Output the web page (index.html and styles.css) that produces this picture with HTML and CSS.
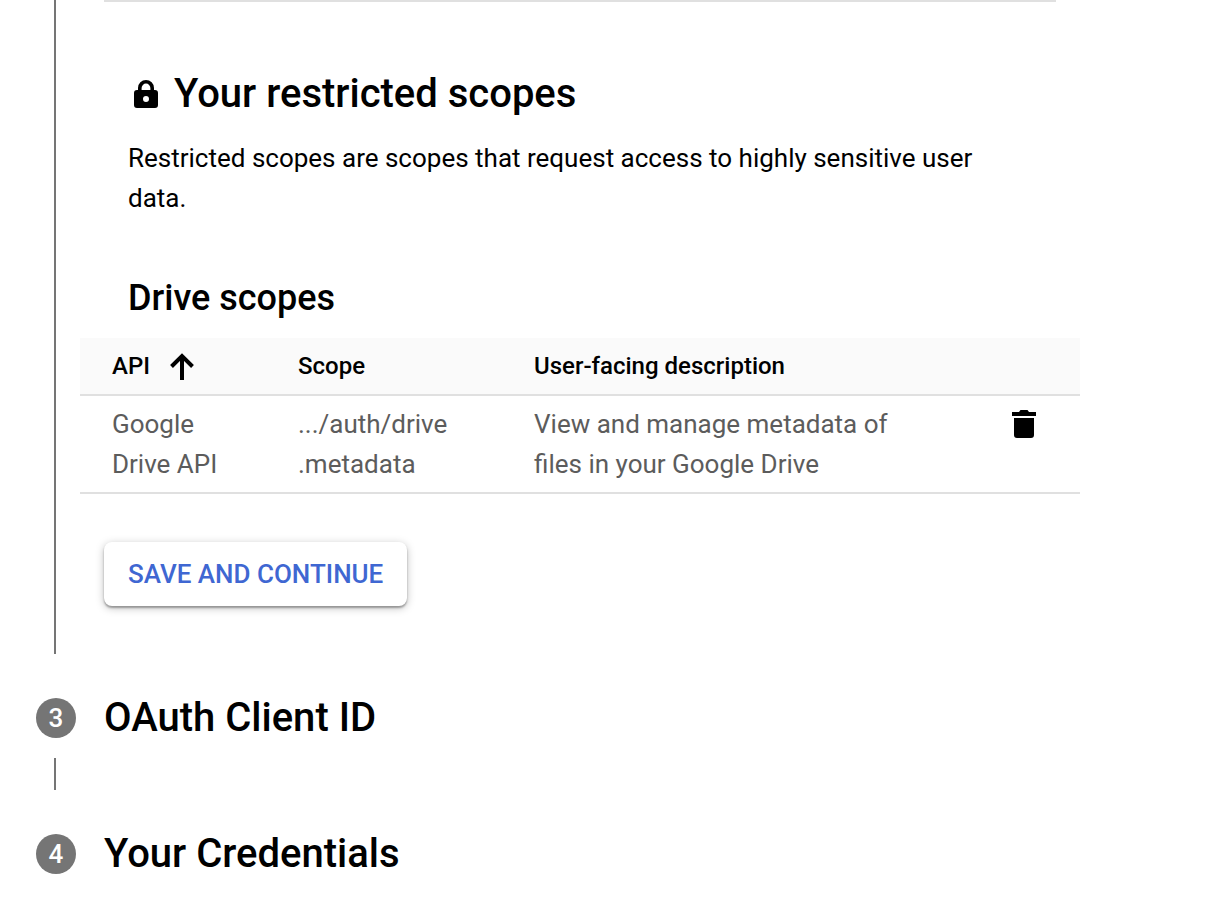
FILE: index.html
```
<!DOCTYPE html>
<html lang="en">
<head>
<meta charset="utf-8">
<meta name="viewport" content="width=device-width, initial-scale=1">
<title>Scopes</title>
<link rel="stylesheet" href="styles.css">
</head>
<body>
<main class="stepper">
  <section class="step-content">
    <hr class="divider">
    <div class="intro">
      <h2 class="title">
        <svg class="lock-icon" viewBox="0 0 24 28" aria-hidden="true"><path fill-rule="evenodd" d="M4 10V8a8 8 0 0 1 16 0v2h1a3 3 0 0 1 3 3v12a3 3 0 0 1-3 3H3a3 3 0 0 1-3-3V13a3 3 0 0 1 3-3zM7.600 10h8.800V8A4.400 4.400 0 0 0 7.600 8zM12 16a3 3 0 1 0 0 6 3 3 0 0 0 0-6z"/></svg>
        <span>Your restricted scopes</span>
      </h2>
      <p class="description">Restricted scopes are scopes that request access to highly sensitive user data.</p>
      <h3 class="subtitle">Drive scopes</h3>
    </div>
    <table class="scopes">
      <colgroup><col class="col-api"><col class="col-scope"><col><col class="col-action"></colgroup>
      <thead>
        <tr>
          <th scope="col" aria-sort="ascending"><button class="sort" type="button">API
            <svg class="sort-icon" viewBox="0 0 24 28" aria-hidden="true"><path fill="none" stroke="#000" stroke-width="4" d="M12 28V4M1.500 14.500 12 4l10.500 10.500"/></svg>
          </button></th>
          <th scope="col">Scope</th>
          <th scope="col">User-facing description</th>
          <td></td>
        </tr>
      </thead>
      <tbody>
        <tr>
          <td>Google Drive API</td>
          <td>.../auth/drive<wbr>.metadata</td>
          <td>View and manage metadata of files in your Google Drive</td>
          <td><button class="delete" type="button" aria-label="Delete scope"><svg class="delete-icon" viewBox="0 0 24 28" aria-hidden="true"><path d="M0 2h7l1.500-2h7L17 2h7v4H0zM2 8h20v17a3 3 0 0 1-3 3H5a3 3 0 0 1-3-3z"/></svg></button></td>
        </tr>
      </tbody>
    </table>
    <button class="save" type="button">SAVE AND CONTINUE</button>
  </section>
  <section class="step">
    <span class="badge">3</span>
    <h2 class="title">OAuth Client ID</h2>
  </section>
  <div class="connector"></div>
  <section class="step">
    <span class="badge">4</span>
    <h2 class="title">Your Credentials</h2>
  </section>
</main>
</body>
</html>
```
FILE: styles.css
```
* {
  box-sizing: border-box;
}

body {
  margin: 0;
  background: #fff;
  color: #000;
  font: 400 26px/40px Roboto, sans-serif;
}

button {
  padding: 0;
  border: 0;
  background: none;
  color: inherit;
  font: inherit;
  cursor: pointer;
}

h2, h3, p {
  margin: 0;
}

svg {
  display: block;
  flex: none;
}

.stepper {
  padding: 0 126px 24px 36px;
}

.step-content {
  margin-left: 18px;
  padding: 0 0 48px 24px;
  border-left: 2px solid #757575;
}

.divider {
  height: 2px;
  margin: 0 24px;
  border: 0;
  background: #e0e0e0;
}

.intro {
  padding: 68px 48px 0;
}

.title {
  display: flex;
  align-items: center;
  font-size: 40px;
  font-weight: 500;
  line-height: 48px;
}

.lock-icon {
  width: 24px;
  height: 28px;
  margin: 0 16px 0 6px;
}

.description {
  margin-top: 20px;
}

.subtitle {
  margin-top: 56px;
  font-size: 36px;
  font-weight: 500;
  line-height: 48px;
}

.scopes {
  width: 100%;
  margin-top: 16px;
  border-collapse: collapse;
  table-layout: fixed;
}

.col-api {
  width: 186px;
}

.col-scope {
  width: 236px;
}

.col-action {
  width: 148px;
}

.scopes th,
.scopes td {
  padding: 8px 0 8px 32px;
  border-bottom: 2px solid #e0e0e0;
  color: #5c5c5c;
  text-align: left;
  vertical-align: top;
}

.scopes thead tr {
  background: #fafafa;
}

.scopes th {
  color: #000;
  font-size: 24px;
  font-weight: 500;
}

.scopes td:nth-child(1) {
  padding-right: 32px;
}

.scopes td:nth-child(3) {
  padding-right: 8px;
}

.scopes td:last-child {
  padding-left: 80px;
}

.sort {
  display: flex;
  align-items: center;
  gap: 20px;
}

.sort-icon {
  width: 24px;
  height: 28px;
}

.delete {
  display: flex;
  align-items: center;
  height: 40px;
}

.delete-icon {
  width: 24px;
  height: 28px;
}

.save {
  display: block;
  margin: 48px 0 0 24px;
  padding: 12px 24px;
  border-radius: 8px;
  background: #fff;
  box-shadow: 0 2px 2px rgba(0, 0, 0, 0.3), 0 2px 8px rgba(0, 0, 0, 0.25);
  color: #3f67d2;
  font-weight: 500;
}

.step {
  display: flex;
  align-items: center;
  gap: 28px;
  padding-top: 40px;
}

.badge {
  width: 40px;
  height: 40px;
  border-radius: 50%;
  background: #757575;
  color: #fff;
  font-size: 26px;
  font-weight: 500;
  text-align: center;
}

.connector {
  width: 2px;
  height: 32px;
  margin: 16px 0 0 18px;
  background: #757575;
}
```
